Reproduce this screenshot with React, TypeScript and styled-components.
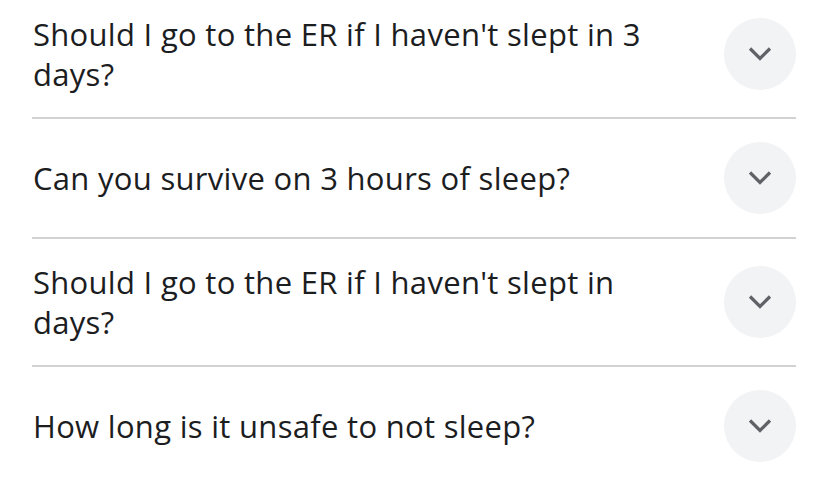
import React from "react";
import styled, { createGlobalStyle } from "styled-components";

const Global = createGlobalStyle`
  html, body { margin: 0; padding: 0; background: #ffffff; }
  body { font-family: "Open Sans", Roboto, Arial, sans-serif; overflow: hidden; }
`;

const List = styled.div`
  display: flex;
  flex-direction: column;
  padding: 0 32px;
  margin-top: -9px;
`;

const Row = styled.div`
  display: flex;
  align-items: center;
  gap: 24px;
  padding: 23px 0;
  border-bottom: 2px solid #d2d2d2;
  &:last-child { border-bottom: none; }
`;

const Question = styled.div`
  flex: 1;
  font-size: 31px;
  font-weight: 500;
  letter-spacing: 0.3px;
  line-height: 40px;
  color: #1c1d1f;
  padding-left: 1px;
  max-width: 640px;
`;

const Toggle = styled.div`
  width: 72px;
  height: 72px;
  border-radius: 50%;
  background: #f1f3f4;
  display: flex;
  align-items: center;
  justify-content: center;
  flex-shrink: 0;
  margin-left: auto;
`;

const Chevron = () => (
  <svg width="28" height="28" viewBox="0 0 28 28">
    <path d="M4 8.5 L14 18.5 L24 8.5" fill="none" stroke="#5f6368" strokeWidth="3.2" strokeLinecap="butt" strokeLinejoin="miter" />
  </svg>
);

const questions = [
  "Should I go to the ER if I haven't slept in 3 days?",
  "Can you survive on 3 hours of sleep?",
  "Should I go to the ER if I haven't slept in days?",
  "How long is it unsafe to not sleep?",
];

export default function App() {
  return (
    <>
      <Global />
      <List>
        {questions.map((q, i) => (
          <Row key={i}>
            <Question>{q}</Question>
            <Toggle>
              <Chevron />
            </Toggle>
          </Row>
        ))}
      </List>
    </>
  );
}
